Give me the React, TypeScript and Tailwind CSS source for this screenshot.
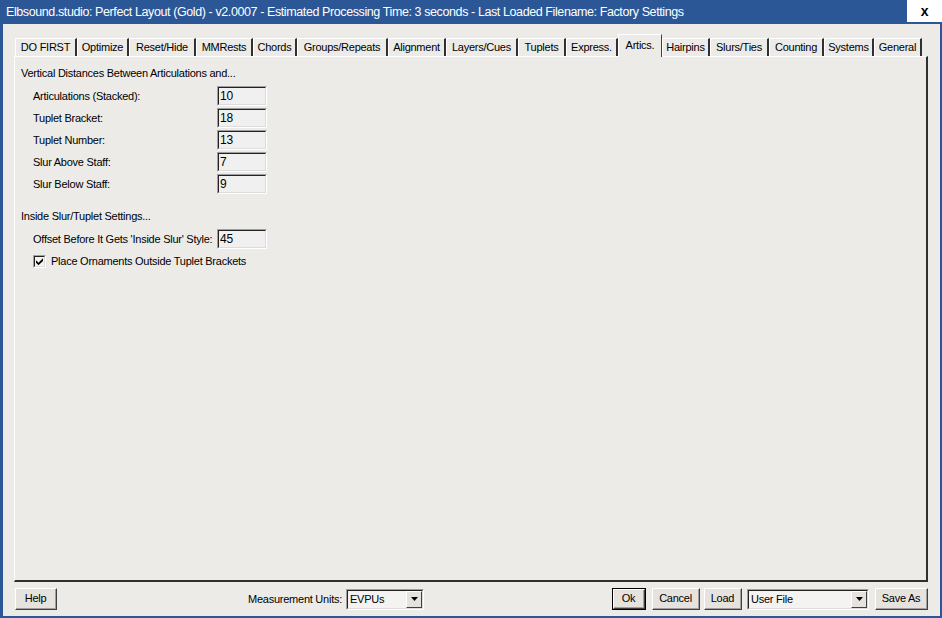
import React from 'react';

const font = { fontFamily: '"Liberation Sans", Arial, sans-serif', letterSpacing: '-0.25px' };

type Tab = { label: string; w: string };

const tabs: Tab[] = [
  { label: 'DO FIRST', w: 'w-[62px]' },
  { label: 'Optimize', w: 'w-[52px]' },
  { label: 'Reset/Hide', w: 'w-[67px]' },
  { label: 'MMRests', w: 'w-[57px]' },
  { label: 'Chords', w: 'w-[44px]' },
  { label: 'Groups/Repeats', w: 'w-[91px]' },
  { label: 'Alignment', w: 'w-[58px]' },
  { label: 'Layers/Cues', w: 'w-[72px]' },
  { label: 'Tuplets', w: 'w-[48px]' },
  { label: 'Express.', w: 'w-[52px]' },
  { label: 'Artics.', w: 'w-[44px]' },
  { label: 'Hairpins', w: 'w-[48px]' },
  { label: 'Slurs/Ties', w: 'w-[59px]' },
  { label: 'Counting', w: 'w-[55px]' },
  { label: 'Systems', w: 'w-[50px]' },
  { label: 'General', w: 'w-[48px]' },
];

const distances = [
  { label: 'Articulations (Stacked):', value: '10' },
  { label: 'Tuplet Bracket:', value: '18' },
  { label: 'Tuplet Number:', value: '13' },
  { label: 'Slur Above Staff:', value: '7' },
  { label: 'Slur Below Staff:', value: '9' },
];

const Field = ({ value }: { value: string }) => (
  <div className="w-[50px] h-[20px] border-t border-l border-t-[#a0a0a0] border-l-[#a0a0a0] border-b border-r border-b-white border-r-white">
    <div className="h-full border-t border-l border-t-[#222] border-l-[#222] border-b border-r border-b-[#dcdcdc] border-r-[#dcdcdc] bg-[#f0f0f0] pl-[1px] text-[12px] leading-[16px] text-black">
      {value}
    </div>
  </div>
);

const Button = ({ label, w, isDefault }: { label: string; w: string; isDefault?: boolean }) => (
  <div className={`${w} h-[22px] ${isDefault ? 'border border-black' : ''}`}>
    <div className="h-full border-t border-l border-t-white border-l-white border-b border-r border-b-[#404040] border-r-[#404040]">
      <div className="h-full flex items-center justify-center border-b border-r border-b-[#a0a0a0] border-r-[#a0a0a0] bg-[#e6e3df] text-[11px] text-black">
        {label}
      </div>
    </div>
  </div>
);

const Select = ({ value, w }: { value: string; w: string }) => (
  <div className={`${w} h-[21px] border-t border-l border-t-[#a0a0a0] border-l-[#a0a0a0] border-b border-r border-b-white border-r-white`}>
    <div className="h-full flex border-t border-l border-t-[#222] border-l-[#222] border-b border-r border-b-[#dcdcdc] border-r-[#dcdcdc] bg-[#f4f3f1]">
      <div className="flex-1 pl-[2px] text-[11px] leading-[17px] text-black">{value}</div>
      <div className="w-[16px] h-full border-t border-l border-t-white border-l-white border-b border-r border-b-[#404040] border-r-[#404040] bg-[#e6e3df] flex items-center justify-center">
        <svg width="7" height="4" viewBox="0 0 7 4">
          <path d="M0 0h7L3.5 4z" fill="#000" />
        </svg>
      </div>
    </div>
  </div>
);

export default function App() {
  return (
    <div style={font} className="w-[942px] h-[618px] bg-[#2b5797] flex flex-col overflow-hidden">
      <div className="h-[24px] flex items-center shrink-0">
        <div
          className="flex-1 pl-[6px] text-[12.5px] text-white whitespace-nowrap"
          style={{ letterSpacing: '-0.4px' }}
        >
          Elbsound.studio: Perfect Layout (Gold) - v2.0007 - Estimated Processing Time: 3 seconds - Last Loaded Filename: Factory Settings
        </div>
        <div className="w-[35px] h-[22px] self-start bg-white flex items-center justify-center text-[14px] font-bold text-black">
          x
        </div>
      </div>

      <div className="flex-1 ml-[3px] mr-[2px] mb-[2px] bg-[#ecebe8] flex flex-col">
        <div className="h-[32px] pt-[10px] pl-[12px] flex items-end shrink-0">
          {tabs.map((t) =>
            t.label === 'Artics.' ? (
              <div
                key={t.label}
                className={`${t.w} h-[23px] -mb-[1px] relative z-10 border-t border-l border-t-white border-l-white border-r border-r-[#404040] bg-[#ecebe8] text-[11px] text-black flex items-center justify-center pb-[2px]`}
              >
                {t.label}
              </div>
            ) : (
              <div
                key={t.label}
                className={`${t.w} h-[18px] border-t border-l border-t-white border-l-white border-r-2 border-r-[#303030] bg-[#ecebe8] text-[11px] text-black flex items-center justify-center`}
              >
                {t.label}
              </div>
            ),
          )}
        </div>

        <div className="ml-[11px] mr-[12px] h-[526px] border-t border-l border-t-white border-l-white border-b-2 border-r-2 border-b-[#303030] border-r-[#303030] pl-[6px] pt-[9px] text-[11px] text-black">
          <div className="h-[14px] leading-[14px]">Vertical Distances Between Articulations and...</div>
          <div className="mt-[6px] flex flex-col gap-[2px] pl-[12px]">
            {distances.map((d) => (
              <div key={d.label} className="h-[20px] flex items-center">
                <div className="w-[184px]">{d.label}</div>
                <Field value={d.value} />
              </div>
            ))}
          </div>

          <div className="mt-[15px] h-[14px] leading-[14px]">Inside Slur/Tuplet Settings...</div>
          <div className="mt-[6px] pl-[12px]">
            <div className="h-[20px] flex items-center">
              <div className="w-[184px] whitespace-nowrap">Offset Before It Gets 'Inside Slur' Style:</div>
              <Field value="45" />
            </div>
            <div className="mt-[5px] h-[14px] flex items-center gap-[5px]">
              <div className="w-[13px] h-[13px] border-t border-l border-t-[#a0a0a0] border-l-[#a0a0a0] border-b border-r border-b-white border-r-white">
                <div className="w-full h-full border-t border-l border-t-[#222] border-l-[#222] border-b border-r border-b-[#dcdcdc] border-r-[#dcdcdc] bg-[#f4f3f1] flex items-center justify-center">
                  <svg width="7" height="7" viewBox="0 0 7 7">
                    <path d="M0 2.3l2.5 2.5L7 0.3v2.6L2.5 7.2 0 4.7z" fill="#000" />
                  </svg>
                </div>
              </div>
              <div>Place Ornaments Outside Tuplet Brackets</div>
            </div>
          </div>
        </div>

        <div className="mt-[6px] pl-[12px] pr-[12px] flex items-center text-[11px] text-black">
          <Button label="Help" w="w-[42px]" />
          <div className="flex-1 flex justify-end items-center pr-[188px]">
            <span className="mr-[4px]">Measurement Units:</span>
            <Select value="EVPUs" w="w-[78px]" />
          </div>
          <Button label="Ok" w="w-[34px]" isDefault />
          <div className="ml-[6px]">
            <Button label="Cancel" w="w-[48px]" />
          </div>
          <div className="ml-[4px]">
            <Button label="Load" w="w-[38px]" />
          </div>
          <div className="ml-[5px]">
            <Select value="User File" w="w-[122px]" />
          </div>
          <div className="ml-[6px]">
            <Button label="Save As" w="w-[53px]" />
          </div>
        </div>
      </div>
    </div>
  );
}
